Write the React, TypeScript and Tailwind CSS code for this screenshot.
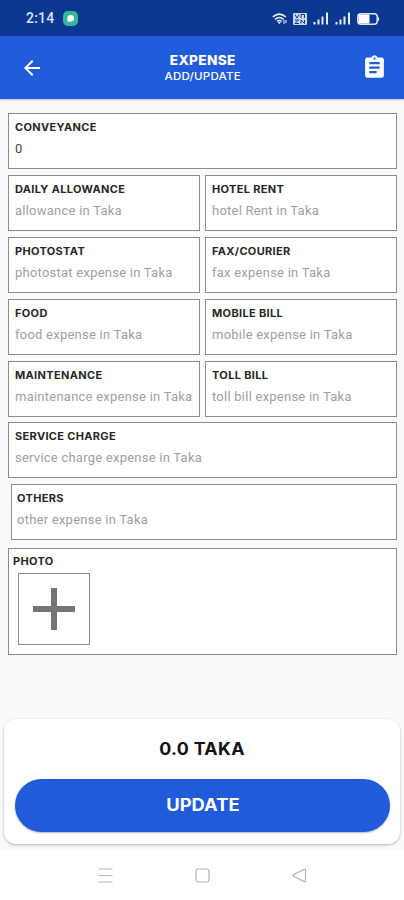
import React from "react";

interface Field {
  label: string;
  hint: string;
  value?: string;
}

const conveyance: Field = { label: "CONVEYANCE", hint: "", value: "0" };

const rows: Field[][] = [
  [
    { label: "DAILY ALLOWANCE", hint: "allowance in Taka" },
    { label: "HOTEL RENT", hint: "hotel Rent in Taka" },
  ],
  [
    { label: "PHOTOSTAT", hint: "photostat expense in Taka" },
    { label: "FAX/COURIER", hint: "fax expense in Taka" },
  ],
  [
    { label: "FOOD", hint: "food expense in Taka" },
    { label: "MOBILE BILL", hint: "mobile expense in Taka" },
  ],
  [
    { label: "MAINTENANCE", hint: "maintenance expense in Taka" },
    { label: "TOLL BILL", hint: "toll bill expense in Taka" },
  ],
];

const service: Field = { label: "SERVICE CHARGE", hint: "service charge expense in Taka" };
const others: Field = { label: "OTHERS", hint: "other expense in Taka" };

const Label: React.FC<{ text: string }> = ({ text }) => (
  <div className="h-[14px] origin-left scale-x-110 text-[10px] leading-[14px] font-bold tracking-[0.3px] text-[#262626]">
    {text}
  </div>
);

const FieldBox: React.FC<{ field: Field; className?: string }> = ({ field, className = "" }) => (
  <div className={`h-14 border border-[#8c8c8c] bg-white pt-[6px] whitespace-nowrap ${className}`}>
    <div className="w-40">
      <Label text={field.label} />
    </div>
    <div
      className={`mt-[6px] font-[Roboto,sans-serif] text-[13px] leading-[18px] tracking-[0.24px] ${
        field.value ? "text-[#444]" : "text-[#a0a0a0]"
      }`}
    >
      {field.value || field.hint}
    </div>
  </div>
);

const Signal = () => (
  <svg width="16" height="13" viewBox="0 0 16 13" fill="#e6edff">
    <rect x="0.5" y="10" width="2" height="2.5" />
    <rect x="4.5" y="7.5" width="2" height="5" />
    <rect x="8.5" y="4.5" width="2" height="8" />
    <rect x="13" y="0.5" width="2" height="12" />
  </svg>
);

const StatusBar = () => (
  <div className="flex h-9 items-center justify-between bg-[#0b388e] pr-[24px] pl-[26px]">
    <div className="flex items-center gap-[9px]">
      <span className="font-[Roboto,sans-serif] text-[14px] leading-none font-medium tracking-[0.2px] text-[#dbe5fa]">2:14</span>
      <svg width="15" height="15" viewBox="0 0 15 15">
        <rect width="15" height="15" rx="5" fill="#35b79b" />
        <circle cx="7.7" cy="7.3" r="3.3" fill="#fff" />
        <path d="M4.6 7.8 4.5 10.7 8 10.4Z" fill="#fff" />
      </svg>
    </div>
    <div className="flex items-center gap-[6px] pt-px">
      <svg width="15" height="12" viewBox="0 0 15 12" fill="none" stroke="#e6edff" strokeWidth="1.6">
        <path d="M0.8 3.8Q7.3-1.7 13.8 3.8M3 6.3q4.3-3.6 8.6 0M5 8.4q2.3-1.7 4.6 0" />
        <path d="M5.6 9 7.3 11.3 9 9Z" fill="#e6edff" stroke="none" />
        <path d="M12 7v4M14 7v3" strokeWidth="1" />
      </svg>
      <svg width="14" height="12" viewBox="0 0 14 12">
        <rect width="14" height="12" rx="1" fill="#cbd8f4" />
        <path d="M2 1.5 4 5 6 1.5M8 5V1.5h3.5V5M2 7h3.5L2 10.5h4M8 10.5V7l3.5 3.5V7" fill="none" stroke="#0b388e" strokeWidth="1" />
      </svg>
      <Signal />
      <Signal />
      <svg width="23" height="12" viewBox="0 0 23 12">
        <rect x="0.8" y="0.8" width="19.4" height="10.4" rx="3" fill="none" stroke="#dbe5fa" strokeWidth="1.5" />
        <rect x="1.5" y="1.5" width="11" height="9" rx="1" fill="#fff" />
        <path d="M21 4q1.5 2 0 4Z" fill="#dbe5fa" stroke="#dbe5fa" />
      </svg>
    </div>
  </div>
);

const Header = () => (
  <div className="flex h-[63px] items-center justify-between bg-[#205bd9] pr-[17px] pl-5 text-white shadow-[0_1px_2px_rgba(0,0,0,0.25)]">
    <svg width="24" height="24" viewBox="0 0 24 24" fill="#fff">
      <path d="M20 11H7.83l5.59-5.59L12 4l-8 8 8 8 1.41-1.41L7.83 13H20v-2z" />
    </svg>
    <div className="pt-[2px] text-center">
      <div className="scale-x-105 text-[13px] leading-[17px] font-extrabold tracking-[0.3px]">EXPENSE</div>
      <div className="scale-x-110 text-[10.5px] leading-[16px] font-medium tracking-[0.2px]">ADD/UPDATE</div>
    </div>
    <svg width="25" height="27" viewBox="0 0 24 24" preserveAspectRatio="none" fill="#fff">
      <path d="M19 3h-4.18C14.4 1.84 13.3 1 12 1c-1.3 0-2.4.84-2.82 2H5c-1.1 0-2 .9-2 2v14c0 1.1.9 2 2 2h14c1.1 0 2-.9 2-2V5c0-1.1-.9-2-2-2zm-7 0c.55 0 1 .45 1 1s-.45 1-1 1-1-.45-1-1 .45-1 1-1zm2 14H7v-2h7v2zm3-4H7v-2h10v2zm0-4H7V7h10v2z" />
    </svg>
  </div>
);

const App: React.FC = () => {
  return (
    <div className="flex h-[900px] w-[404px] flex-col overflow-hidden bg-[#fafafa] font-[Inter,sans-serif]">
      <StatusBar />
      <Header />

      {/* Form */}
      <div className="flex flex-col gap-[6px] pt-[14px] pr-[7px] pl-2">
        <FieldBox field={conveyance} className="pl-[6px]" />
        {rows.map((row, index) => (
          <div key={index} className="grid grid-cols-[192px_192px] gap-[5px]">
            {row.map((field) => (
              <FieldBox key={field.label} field={field} className="pl-[6px]" />
            ))}
          </div>
        ))}
        <FieldBox field={service} className="-mt-px pl-[6px]" />
        <FieldBox field={others} className="ml-[3px] pl-[5px]" />
        <div className="mt-[2px] h-[107px] border border-[#8c8c8c] bg-white pt-[5px]">
          <div className="ml-1 w-40">
            <Label text="PHOTO" />
          </div>
          <div className="mt-[5px] ml-[9px] flex h-[72px] w-[72px] items-center justify-center border border-[#8c8c8c]">
            <svg width="42" height="42" viewBox="0 0 42 42" fill="#757575">
              <path d="M18 0h6v18h18v6H24v18h-6V24H0v-6h18z" />
            </svg>
          </div>
        </div>
      </div>

      {/* Total and submit */}
      <div className="mx-1 mt-[64px] h-[125px] rounded-[12px] bg-white px-[11px] pt-[18px] shadow-[0_1px_3px_rgba(0,0,0,0.28)]">
        <div className="scale-x-105 text-center text-[17px] leading-6 font-bold tracking-[0.3px] text-[#111]">0.0 TAKA</div>
        <button className="mt-[18px] block h-[53px] w-[375px] rounded-full bg-[#205bd9] pt-px text-[17px] font-bold text-white shadow-[0_1px_2px_rgba(0,0,0,0.3)]">
          <span className="inline-block scale-x-108">UPDATE</span>
        </button>
      </div>

      {/* System navigation */}
      <div className="mt-auto flex h-[50px] items-center justify-center gap-[82px] bg-white">
        <svg width="15" height="15" viewBox="0 0 15 15" stroke="#b5b5b5" strokeWidth="1.2">
          <path d="M0.5 1h14M0.5 7.5h14M0.5 14h14" />
        </svg>
        <svg width="15" height="15" viewBox="0 0 15 15" fill="none" stroke="#b5b5b5" strokeWidth="1.2">
          <rect x="1" y="1" width="13" height="13" rx="2.5" />
        </svg>
        <svg width="15" height="15" viewBox="0 0 15 15" fill="none" stroke="#b5b5b5" strokeWidth="1.2" strokeLinejoin="round">
          <path d="M13.5 2v11q0 1.3-1.2.6L1.5 8.2q-1-.7 0-1.4L12.3 1.4q1.2-.7 1.2.6z" />
        </svg>
      </div>
    </div>
  );
};

export default App;
